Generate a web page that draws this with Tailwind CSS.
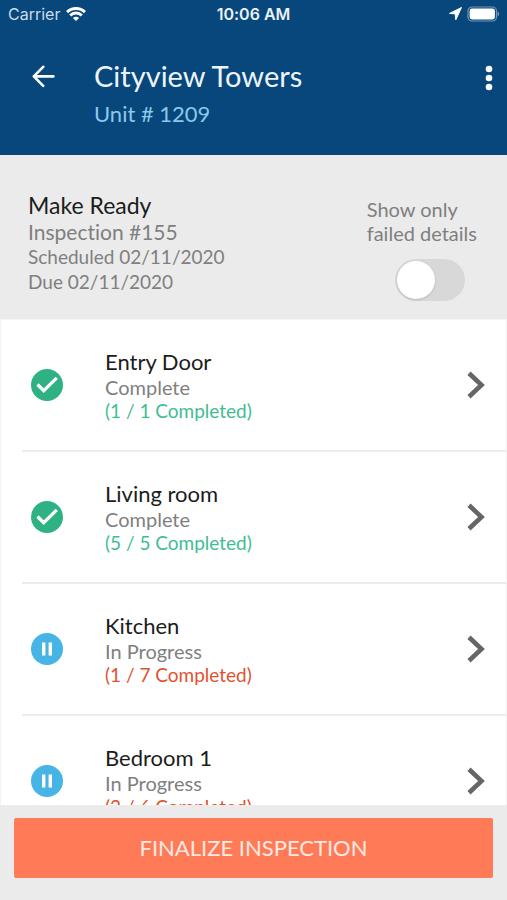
<!DOCTYPE html>
<html lang="en">
<head>
  <meta charset="UTF-8" />
  <meta name="viewport" content="width=device-width, initial-scale=1.0" />
  <title>Cityview Towers - Unit # 1209</title>
  <script src="https://cdn.jsdelivr.net/npm/@tailwindcss/browser@4"></script>
</head>
<body class="h-screen flex flex-col overflow-hidden bg-[#ebebeb] font-['Lato','Open_Sans',sans-serif] [font-variant-ligatures:none] text-xl text-[#7f7f7f]">

  <!-- Header -->
  <header class="shrink-0 bg-[#08477b] text-white pb-[27px]">
    <div class="grid grid-cols-3 items-center h-7 px-2 font-['Inter',sans-serif] text-base">
      <div class="flex items-center gap-1.5 text-[#c9dcea]">
        <span>Carrier</span>
        <svg class="w-5 h-4" viewBox="0 0 20 15" fill="none" stroke="#fff" stroke-width="3">
          <path d="M1 5.6a12.8 12.8 0 0 1 18 0" />
          <path d="M4.2 9a8.2 8.2 0 0 1 11.6 0" />
          <path d="M10 14.6 6.9 11.5a4.4 4.4 0 0 1 6.2 0z" fill="#fff" stroke="none" />
        </svg>
      </div>
      <span class="text-center font-semibold whitespace-nowrap text-[#eaf2f8]">10:06 AM</span>
      <div class="flex items-center justify-end gap-1">
        <svg class="w-4 h-4" viewBox="0 0 16 16" fill="#fff" stroke="#fff" stroke-linejoin="round"><path d="M14.5 1.5 2.5 7.4 8.2 7.9 8.8 13.8z" /></svg>
        <svg class="w-8 h-4" viewBox="0 0 32 16">
          <rect x="1" y="1" width="28.5" height="14" rx="4" fill="none" stroke="#7398b8" stroke-width="1.2" />
          <rect x="2.6" y="2.6" width="25.3" height="10.8" rx="2.4" fill="#fff" />
          <path d="M30.6 5.6a2.6 2.6 0 0 1 0 4.8z" fill="#7398b8" />
        </svg>
      </div>
    </div>

    <div class="flex items-start pt-8 pl-8 pr-1">
      <button aria-label="Back" class="mt-1 w-6 h-6">
        <svg class="w-6 h-6" viewBox="0 0 24 24" fill="none" stroke="#fff" stroke-width="2.6" stroke-linecap="round" stroke-linejoin="round">
          <path d="M21.4 12.4H2M11.2 2.8 1.8 12.4l9.4 9.4" />
        </svg>
      </button>
      <div class="flex-1 pl-[38px]">
        <h1 class="text-[29px] leading-8 text-[#edf5fb]">Cityview Towers</h1>
        <p class="mt-2 text-[22px] leading-7 text-[#8cc8ea]">Unit # 1209</p>
      </div>
      <button aria-label="More options" class="mt-1 w-7 h-7">
        <svg class="w-7 h-7" viewBox="0 0 28 28" fill="#fff">
          <circle cx="14" cy="5" r="3.3" /><circle cx="14" cy="14" r="3.3" /><circle cx="14" cy="23" r="3.3" />
        </svg>
      </button>
    </div>
  </header>

  <!-- Inspection summary -->
  <section class="shrink-0 flex justify-between pt-[37px] pb-[18px] pl-7 pr-[30px] leading-[25px] border-b border-[#f3f3f3]">
    <div class="text-[19px]">
      <h2 class="text-[23px] leading-[27px] text-[#1c1c1c]">Make Ready</h2>
      <p class="text-[21px]">Inspection #155</p>
      <p>Scheduled 02/11/2020</p>
      <p>Due 02/11/2020</p>
    </div>
    <div class="pt-[5px]">
      <label for="failedOnly" class="block leading-6">Show only<br />failed details</label>
      <input id="failedOnly" type="checkbox" role="switch" class="appearance-none block mt-3.5 ml-7 w-[70px] h-[42px] rounded-full bg-[#d8d8d8] before:block before:w-[38px] before:h-[38px] before:m-0.5 before:rounded-full before:bg-white before:shadow checked:bg-[#2eb284] checked:before:ml-[30px]" />
    </div>
  </section>

  <!-- Areas -->
  <main class="flex-1 min-h-0 overflow-hidden bg-white border-x border-[#f3f3f3]">
    <ul>
      <li class="flex items-center h-[132px] ml-[21px] pr-5 border-b-2 border-[#ececec]">
        <svg class="ml-[9px] w-8 h-8" viewBox="0 0 32 32"><circle cx="16" cy="16" r="16" fill="#2eb284" /><path d="m6.5 15.5 6.2 6.2L25.8 8.8" fill="none" stroke="#fff" stroke-width="3.2" /></svg>
        <div class="flex-1 pl-[42px] leading-6">
          <h3 class="text-[22px] leading-[27px] text-[#1c1c1c]">Entry Door</h3>
          <p>Complete</p>
          <p class="text-[19px] text-[#3fbd92]">(1 / 1 Completed)</p>
        </div>
        <button aria-label="Open Entry Door" class="w-5 h-7"><svg class="w-5 h-7" viewBox="0 0 20 28" fill="none" stroke="#666" stroke-width="4.6"><path d="M3 2.3 15.5 14 3 25.7" /></svg></button>
      </li>
      <li class="flex items-center h-[132px] ml-[21px] pr-5 border-b-2 border-[#ececec]">
        <svg class="ml-[9px] w-8 h-8" viewBox="0 0 32 32"><circle cx="16" cy="16" r="16" fill="#2eb284" /><path d="m6.5 15.5 6.2 6.2L25.8 8.8" fill="none" stroke="#fff" stroke-width="3.2" /></svg>
        <div class="flex-1 pl-[42px] leading-6">
          <h3 class="text-[22px] leading-[27px] text-[#1c1c1c]">Living room</h3>
          <p>Complete</p>
          <p class="text-[19px] text-[#3fbd92]">(5 / 5 Completed)</p>
        </div>
        <button aria-label="Open Living room" class="w-5 h-7"><svg class="w-5 h-7" viewBox="0 0 20 28" fill="none" stroke="#666" stroke-width="4.6"><path d="M3 2.3 15.5 14 3 25.7" /></svg></button>
      </li>
      <li class="flex items-center h-[132px] ml-[21px] pr-5 border-b-2 border-[#ececec]">
        <svg class="ml-[9px] w-8 h-8" viewBox="0 0 32 32"><circle cx="16" cy="16" r="16" fill="#46b5e6" /><path d="M12.7 9.5v13M19.3 9.5v13" stroke="#fff" stroke-width="3.4" /></svg>
        <div class="flex-1 pl-[42px] leading-6">
          <h3 class="text-[22px] leading-[27px] text-[#1c1c1c]">Kitchen</h3>
          <p>In Progress</p>
          <p class="text-[19px] text-[#e2512f]">(1 / 7 Completed)</p>
        </div>
        <button aria-label="Open Kitchen" class="w-5 h-7"><svg class="w-5 h-7" viewBox="0 0 20 28" fill="none" stroke="#666" stroke-width="4.6"><path d="M3 2.3 15.5 14 3 25.7" /></svg></button>
      </li>
      <li class="flex items-center h-[132px] ml-[21px] pr-5 border-b-2 border-[#ececec]">
        <svg class="ml-[9px] w-8 h-8" viewBox="0 0 32 32"><circle cx="16" cy="16" r="16" fill="#46b5e6" /><path d="M12.7 9.5v13M19.3 9.5v13" stroke="#fff" stroke-width="3.4" /></svg>
        <div class="flex-1 pl-[42px] leading-6">
          <h3 class="text-[22px] leading-[27px] text-[#1c1c1c]">Bedroom 1</h3>
          <p>In Progress</p>
          <p class="text-[19px] text-[#e2512f]">(2 / 6 Completed)</p>
        </div>
        <button aria-label="Open Bedroom 1" class="w-5 h-7"><svg class="w-5 h-7" viewBox="0 0 20 28" fill="none" stroke="#666" stroke-width="4.6"><path d="M3 2.3 15.5 14 3 25.7" /></svg></button>
      </li>
    </ul>
  </main>

  <!-- Footer action -->
  <footer class="shrink-0 pt-[13px] pb-[22px] px-3.5">
    <button class="w-full h-[60px] rounded-xs bg-[#ff7b57] text-[22px] text-[#ffe9e2]">FINALIZE INSPECTION</button>
  </footer>

</body>
</html>
